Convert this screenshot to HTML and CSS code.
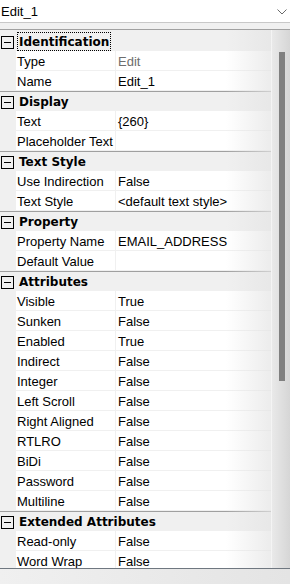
FILE: index.html
```html
<!DOCTYPE html>
<html lang="en">
<head>
    <meta charset="UTF-8">
    <meta name="viewport" content="width=device-width, initial-scale=1.0">
    <title>Properties</title>
    <link rel="stylesheet" href="styles.css">
</head>
<body>
    <div class="panel">
        <div class="combo">
            <span class="combo-text">Edit_1</span>
            <svg class="chevron" width="10" height="6" viewBox="0 0 10 6">
                <path d="M0.5 0.5 L5 5 L9.5 0.5" fill="none" stroke="#6a6a6a" stroke-width="1"/>
            </svg>
        </div>
        <div class="strip"></div>

        <div class="grid-wrap">
            <div class="grid">
                <div class="cat first">
                    <span class="box"></span>
                    <span class="cat-name focused">Identification</span>
                </div>
                <div class="row"><span class="name">Type</span><span class="value readonly">Edit</span></div>
                <div class="row"><span class="name">Name</span><span class="value">Edit_1</span></div>

                <div class="cat"><span class="box"></span><span class="cat-name">Display</span></div>
                <div class="row"><span class="name">Text</span><span class="value">{260}</span></div>
                <div class="row"><span class="name">Placeholder Text</span><span class="value"></span></div>

                <div class="cat"><span class="box"></span><span class="cat-name">Text Style</span></div>
                <div class="row"><span class="name">Use Indirection</span><span class="value">False</span></div>
                <div class="row"><span class="name">Text Style</span><span class="value">&lt;default text style&gt;</span></div>

                <div class="cat"><span class="box"></span><span class="cat-name">Property</span></div>
                <div class="row"><span class="name">Property Name</span><span class="value">EMAIL_ADDRESS</span></div>
                <div class="row"><span class="name">Default Value</span><span class="value"></span></div>

                <div class="cat"><span class="box"></span><span class="cat-name">Attributes</span></div>
                <div class="row"><span class="name">Visible</span><span class="value">True</span></div>
                <div class="row"><span class="name">Sunken</span><span class="value">False</span></div>
                <div class="row"><span class="name">Enabled</span><span class="value">True</span></div>
                <div class="row"><span class="name">Indirect</span><span class="value">False</span></div>
                <div class="row"><span class="name">Integer</span><span class="value">False</span></div>
                <div class="row"><span class="name">Left Scroll</span><span class="value">False</span></div>
                <div class="row"><span class="name">Right Aligned</span><span class="value">False</span></div>
                <div class="row"><span class="name">RTLRO</span><span class="value">False</span></div>
                <div class="row"><span class="name">BiDi</span><span class="value">False</span></div>
                <div class="row"><span class="name">Password</span><span class="value">False</span></div>
                <div class="row"><span class="name">Multiline</span><span class="value">False</span></div>

                <div class="cat"><span class="box"></span><span class="cat-name">Extended Attributes</span></div>
                <div class="row"><span class="name">Read-only</span><span class="value">False</span></div>
                <div class="row"><span class="name">Word Wrap</span><span class="value">False</span></div>
            </div>
            <div class="scrollbar">
                <div class="thumb"></div>
            </div>
        </div>

        <div class="footer"></div>
    </div>
</body>
</html>
```

FILE: styles.css
```css
/* Page */
body {
    margin: 0;
    font-family: "Liberation Sans", Arial, sans-serif;
    font-size: 13px;
    color: #000000;
    background: #f0f0f0;
}

.panel {
    width: 290px;
    height: 584px;
    display: flex;
    flex-direction: column;
    overflow: hidden;
}

/* Object selector */
.combo {
    height: 22px;
    flex-shrink: 0;
    display: flex;
    align-items: center;
    justify-content: space-between;
    padding: 0 3px 0 1px;
    background: #ffffff;
    border-bottom: 1px solid #c8c8c8;
}

.combo-text {
    font-size: 13px;
}

.chevron {
    margin-top: 1px;
}

.strip {
    height: 6px;
    flex-shrink: 0;
    background: #f0f0f0;
    border-bottom: 1px solid #a0a0a0;
}

/* Property grid */
.grid-wrap {
    height: 538px;
    flex-shrink: 0;
    display: flex;
    overflow: hidden;
}

.grid {
    position: relative;
    flex: 1;
    padding-top: 1px;
    background: #f0f0f0;
    overflow: hidden;
}

/* soft shade along the right edge */
.grid::after {
    content: "";
    position: absolute;
    top: 0;
    right: 0;
    bottom: 0;
    width: 45px;
    background: linear-gradient(to right, rgba(228, 228, 228, 0), rgba(228, 228, 228, 0.7));
    pointer-events: none;
}

.cat {
    height: 19px;
    display: flex;
    align-items: center;
    background: #f0f0f0;
    border-top: 1px solid #a0a0a0;
}

.cat.first {
    border-top-color: #f0f0f0;
}

.box {
    width: 11px;
    height: 11px;
    margin: 1px 3px 0 1px;
    border: 1px solid #000000;
    position: relative;
    flex-shrink: 0;
}

.box::after {
    content: "";
    position: absolute;
    left: 2px;
    right: 2px;
    top: 5px;
    height: 1px;
    background: #000000;
}

.cat-name {
    font-family: "DejaVu Sans", sans-serif;
    font-weight: bold;
    font-size: 12px;
    padding: 2px 1px 1px 1px;
    border: 1px dotted transparent;
}

.cat-name.focused {
    border-color: #000000;
}

.row {
    height: 19px;
    display: flex;
    border-bottom: 1px solid #f0f0f0;
    margin-left: 16px;
}

.name {
    width: 98px;
    padding: 1px 0 0 1px;
    line-height: 19px;
    background: #ffffff;
    border-right: 1px solid #f0f0f0;
    white-space: nowrap;
    overflow: hidden;
}

.value {
    flex: 1;
    padding: 1px 0 0 2px;
    line-height: 19px;
    background: #ffffff;
    white-space: nowrap;
    overflow: hidden;
}

.value.readonly {
    color: #6d6d6d;
}

/* Scrollbar */
.scrollbar {
    width: 19px;
    flex-shrink: 0;
    border-left: 1px solid #f4f4f4;
    padding-left: 7px;
    box-sizing: border-box;
    background: linear-gradient(to right, #e9e9e9, #d6d6d6);
}

.thumb {
    width: 6px;
    height: 329px;
    margin-top: 22px;
    background: #808080;
}

.footer {
    flex: 1;
    border-top: 1px solid #6f7780;
    background: linear-gradient(to right, #f0f0f0, #e4e4e4);
}
```
